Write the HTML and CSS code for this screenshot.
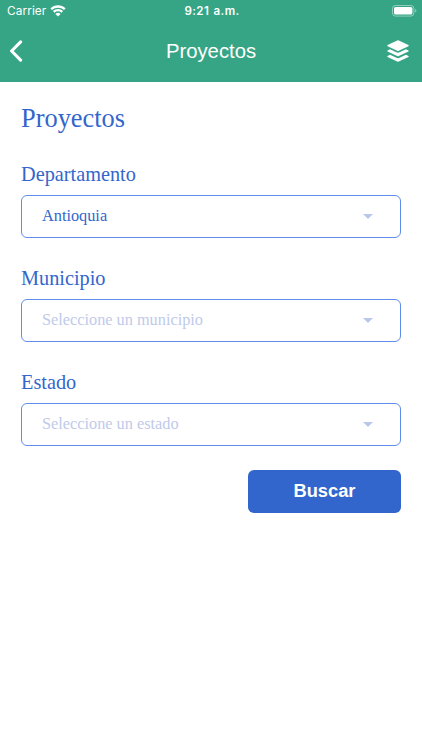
FILE: index.html
```
<!DOCTYPE html>
<html lang="es">
<head>
<meta charset="UTF-8" />
<meta name="viewport" content="width=device-width, initial-scale=1" />
<title>Proyectos</title>
<link rel="stylesheet" href="styles.css">
</head>
<body>
<header class="header">
  <div class="status-bar">
    <div class="carrier">
      <span>Carrier</span>
      <svg class="wifi" viewBox="0 0 16 12" aria-hidden="true">
        <path d="M1.2 4.3a9.6 9.6 0 0 1 13.6 0M3.7 6.9a6.1 6.1 0 0 1 8.6 0" />
        <path class="dot" d="M8 11.6 5.4 9.1a3.7 3.7 0 0 1 5.2 0z" />
      </svg>
    </div>
    <span class="time">9:21 a.m.</span>
    <div class="battery-wrap">
      <svg class="battery" viewBox="0 0 25 12" aria-hidden="true">
        <rect class="shell" x="0.5" y="0.5" width="21.4" height="10.6" rx="3" />
        <rect x="2" y="2" width="18.4" height="7.6" rx="1.6" />
        <path class="cap" d="M23.2 4v3.6c1.6-.6 1.6-3 0-3.6z" />
      </svg>
    </div>
  </div>
  <nav class="nav-bar">
    <button class="icon-btn" aria-label="Volver">
      <svg class="back" viewBox="0 0 14 22" aria-hidden="true">
        <path d="M11.6 1.9 2.6 11l9 9.1" />
      </svg>
    </button>
    <h1>Proyectos</h1>
    <button class="icon-btn right" aria-label="Capas">
      <svg class="layers" viewBox="0 0 22 22" aria-hidden="true">
        <path d="M10.2.5a2 2 0 0 1 1.6 0l9.6 4.6c.5.3.5.8 0 1.1l-9.6 4.6a2 2 0 0 1-1.6 0L.6 6.2c-.5-.3-.5-.8 0-1.1z" />
        <path d="M.6 10.4 3 9.3l6.4 3c1.1.5 2.1.5 3.2 0l6.4-3 2.4 1.1c.5.3.5.8 0 1.1l-9.6 4.6a2 2 0 0 1-1.6 0L.6 11.5c-.5-.3-.5-.8 0-1.1z" />
        <path d="M.6 15.9 3 14.8l6.4 3c1.1.5 2.1.5 3.2 0l6.4-3 2.4 1.1c.5.3.5.8 0 1.1l-9.6 4.6a2 2 0 0 1-1.6 0L.6 17c-.5-.3-.5-.8 0-1.1z" />
      </svg>
    </button>
  </nav>
</header>

<main class="content">
  <h2>Proyectos</h2>

  <div class="field">
    <div class="label">Departamento</div>
    <div class="select" role="button" tabindex="0">
      <span>Antioquia</span>
      <i class="arrow"></i>
    </div>
  </div>

  <div class="field">
    <div class="label">Municipio</div>
    <div class="select empty" role="button" tabindex="0">
      <span>Seleccione un municipio</span>
      <i class="arrow"></i>
    </div>
  </div>

  <div class="field">
    <div class="label">Estado</div>
    <div class="select empty" role="button" tabindex="0">
      <span>Seleccione un estado</span>
      <i class="arrow"></i>
    </div>
  </div>

  <button class="search-btn">Buscar</button>
</main>
</body>
</html>
```

FILE: styles.css
```
* {
  margin: 0;
  padding: 0;
  box-sizing: border-box;
}

body {
  min-height: 100vh;
  background: #fff;
  font-family: "Liberation Serif", "Times New Roman", serif;
  color: #3366cc;
}

button {
  border: none;
  background: none;
  cursor: pointer;
}

/* Header */
.header {
  height: 81.7px;
  background: #35a585;
  color: #fff;
}

.status-bar {
  display: grid;
  grid-template-columns: 1fr auto 1fr;
  align-items: center;
  height: 21px;
  padding: 0 5px 0 7px;
  font-family: Inter, sans-serif;
  font-size: 11.8px;
}

.carrier {
  display: flex;
  align-items: center;
  gap: 4px;
  letter-spacing: 0.1px;
}

.wifi {
  width: 16px;
  height: 12px;
  fill: none;
  stroke: #fff;
  stroke-width: 2.3;
}

.wifi .dot {
  fill: #fff;
  stroke: none;
}

.time {
  font-size: 11.6px;
  font-weight: 600;
  letter-spacing: 0.4px;
  word-spacing: 1px;
}

.battery-wrap {
  display: flex;
  justify-content: flex-end;
}

.battery {
  width: 25px;
  height: 12px;
  fill: #fff;
}

.battery .shell {
  fill: none;
  stroke: #fff;
  stroke-opacity: 0.45;
}

.battery .cap {
  fill-opacity: 0.5;
}

.nav-bar {
  display: grid;
  grid-template-columns: 1fr auto 1fr;
  align-items: center;
  height: 60px;
  padding: 0 13px 0 9px;
}

.nav-bar h1 {
  padding-left: 4px;
  font-family: "Liberation Sans", Arial, sans-serif;
  font-size: 20.3px;
  font-weight: 400;
}

.icon-btn {
  display: flex;
}

.icon-btn.right {
  justify-content: flex-end;
}

.back {
  width: 14px;
  height: 22px;
  fill: none;
  stroke: #fff;
  stroke-width: 3.1;
  stroke-linecap: round;
  stroke-linejoin: round;
}

.layers {
  width: 22px;
  height: 22px;
  fill: #fff;
}

/* Form */
.content {
  display: flex;
  flex-direction: column;
  padding: 21.3px 21px 0;
}

.content h2 {
  height: 30px;
  line-height: 30px;
  font-size: 26.4px;
  font-weight: 400;
  margin-bottom: 29px;
}

.field {
  margin-bottom: 28px;
}

.label {
  height: 24px;
  line-height: 24px;
  font-size: 20.3px;
  margin-bottom: 9px;
}

.select {
  display: flex;
  align-items: center;
  justify-content: space-between;
  height: 43px;
  padding: 0 27px 0 20px;
  border: 1px solid #5f8dec;
  border-radius: 6px;
  font-size: 16.3px;
  cursor: pointer;
}

.select.empty {
  color: #bfcaea;
}

.arrow {
  border: 5px solid transparent;
  border-top-color: #bac7ec;
  border-bottom: none;
}

.search-btn {
  align-self: flex-end;
  width: 153px;
  height: 43px;
  margin-top: -4px;
  border-radius: 6px;
  background: #3366cc;
  color: #fff;
  font-family: "Liberation Sans", Arial, sans-serif;
  font-size: 18.3px;
  font-weight: 700;
}
```
